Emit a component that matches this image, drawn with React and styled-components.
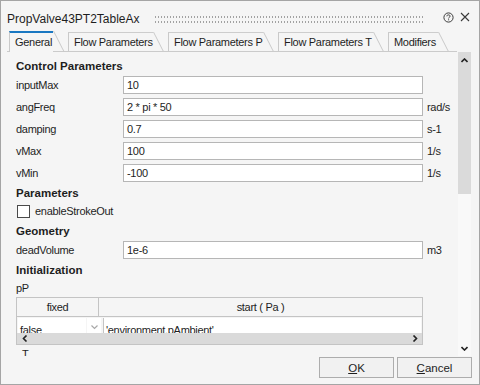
import React from 'react';
import styled, { createGlobalStyle } from 'styled-components';

const GlobalStyle = createGlobalStyle`
  html, body { margin: 0; padding: 0; background: #f5f5f5; }
  body { font-family: "Liberation Sans", Arial, sans-serif; }
`;

const tabs = [
  { label: 'General', w: 44, active: true },
  { label: 'Flow Parameters', w: 85 },
  { label: 'Flow Parameters P', w: 95 },
  { label: 'Flow Parameters T', w: 95 },
  { label: 'Modifiers', w: 50 },
];

const fields = [
  { name: 'inputMax', value: '10', unit: '' },
  { name: 'angFreq', value: '2 * pi * 50', unit: 'rad/s' },
  { name: 'damping', value: '0.7', unit: 's-1' },
  { name: 'vMax', value: '100', unit: '1/s' },
  { name: 'vMin', value: '-100', unit: '1/s' },
];

const App = () => (
  <>
    <GlobalStyle />
    <Dialog>
      <TitleBar>
        <Title>PropValve43PT2TableAx</Title>
        <Grip />
        <IconButton>
          <svg width="11" height="11" viewBox="0 0 11 11">
            <circle cx="5.5" cy="5.5" r="4.6" fill="none" stroke="#3a3a3a" strokeWidth="1" />
            <path d="M3.9 4.3 C3.9 3.2 4.6 2.9 5.5 2.9 C6.4 2.9 7.1 3.4 7.1 4.2 C7.1 5.2 5.6 5.2 5.6 6.4" fill="none" stroke="#3a3a3a" strokeWidth="1" />
            <rect x="5.1" y="7.3" width="1" height="1" fill="#3a3a3a" />
          </svg>
        </IconButton>
        <IconButton>
          <svg width="10" height="10" viewBox="0 0 10 10">
            <path d="M1 1 L9 9 M9 1 L1 9" stroke="#3a3a3a" strokeWidth="1.1" />
          </svg>
        </IconButton>
      </TitleBar>

      <TabStrip>
        {tabs.map((t) => (
          <Tab key={t.label} $active={t.active} $w={t.w}>
            {t.label}
          </Tab>
        ))}
      </TabStrip>

      <Body>
        <Content>
          <Heading $top={5}>Control Parameters</Heading>
          {fields.map((f, i) => (
            <FieldRow key={f.name} $top={i === 0 ? 1 : 4}>
              <Label>{f.name}</Label>
              <Input>{f.value}</Input>
              <Unit>{f.unit}</Unit>
            </FieldRow>
          ))}
          <Heading $top={2}>Parameters</Heading>
          <CheckRow>
            <Checkbox />
            <Label>enableStrokeOut</Label>
          </CheckRow>
          <Heading $top={2}>Geometry</Heading>
          <FieldRow $top={1}>
            <Label>deadVolume</Label>
            <Input>1e-6</Input>
            <Unit>m3</Unit>
          </FieldRow>
          <Heading $top={2}>Initialization</Heading>
          <TextLine>pP</TextLine>
          <Table>
            <HeaderRow>
              <HeaderCell $w={82}>fixed</HeaderCell>
              <HeaderCell>start ( Pa )</HeaderCell>
            </HeaderRow>
            <DataRow>
              <ValueCell $w={66}>false</ValueCell>
              <DropCell>
                <svg width="7" height="5" viewBox="0 0 7 5">
                  <path d="M0.5 0.5 L3.5 3.5 L6.5 0.5" fill="none" stroke="#a8a8a8" strokeWidth="1.2" />
                </svg>
              </DropCell>
              <ValueCell $grow>'environment.pAmbient'</ValueCell>
            </DataRow>
            <HScroll>
              <svg width="6" height="7" viewBox="0 0 6 7">
                <path d="M4.5 0.5 L1.5 3.5 L4.5 6.5" fill="none" stroke="#222" strokeWidth="1.6" />
              </svg>
              <svg width="6" height="7" viewBox="0 0 6 7">
                <path d="M1.5 0.5 L4.5 3.5 L1.5 6.5" fill="none" stroke="#222" strokeWidth="1.6" />
              </svg>
            </HScroll>
          </Table>
          <TextLine $indent={6}>T</TextLine>
        </Content>
        <VScroll>
          <Thumb>
            <svg width="7" height="5" viewBox="0 0 7 5">
              <path d="M0.5 4 L3.5 1 L6.5 4" fill="none" stroke="#222" strokeWidth="1.6" />
            </svg>
          </Thumb>
          <svg width="7" height="5" viewBox="0 0 7 5">
            <path d="M0.5 1 L3.5 4 L6.5 1" fill="none" stroke="#222" strokeWidth="1.6" />
          </svg>
        </VScroll>
      </Body>

      <Footer>
        <Button><u>O</u>K</Button>
        <Button><u>C</u>ancel</Button>
      </Footer>
    </Dialog>
  </>
);

const Dialog = styled.div`
  width: 480px;
  height: 385px;
  box-sizing: border-box;
  border: 1px solid #a5a5a5;
  background: #f5f5f5;
  display: flex;
  flex-direction: column;
  color: #1e1e1e;
  font-size: 11px;
  letter-spacing: -0.3px;
  overflow: hidden;
`;

const TitleBar = styled.div`
  height: 30px;
  flex-shrink: 0;
  box-sizing: border-box;
  padding: 6px 9px 0 6px;
  display: flex;
  align-items: center;
`;

const Title = styled.span`
  font-size: 12px;
  letter-spacing: 0;
  color: #1e1e1e;
`;

// two rows of 2px dots, 3px apart
const Grip = styled.div`
  flex: 1;
  align-self: flex-start;
  height: 7px;
  margin: 9px 12px 0 15px;
  background-image: conic-gradient(at 1px 2px, transparent 75%, #a2a2a2 0);
  background-size: 3px 5px;
`;

const IconButton = styled.div`
  display: flex;
  margin: 0 0 4px 6px;
`;

const TabStrip = styled.div`
  height: 20px;
  flex-shrink: 0;
  margin: 0 22px 0 6px;
  padding-left: 2px;
  border-bottom: 1px solid #cbcbcb;
  display: flex;
  align-items: flex-end;
`;

const Tab = styled.div`
  position: relative;
  box-sizing: border-box;
  width: ${(p) => p.$w}px;
  height: ${(p) => (p.$active ? 21 : 19)}px;
  margin-right: 15px;
  margin-bottom: ${(p) => (p.$active ? -1 : 0)}px;
  padding-left: 5px;
  border-left: 1px solid #c9c9c9;
  border-top: ${(p) => (p.$active ? '2px solid #1a78c2' : '1px solid #cdcdcd')};
  background: #f5f5f5;
  display: flex;
  align-items: center;
  padding-bottom: ${(p) => (p.$active ? 2 : 0)}px;
  white-space: nowrap;
  font-size: 11px;

  &::after {
    content: '';
    position: absolute;
    top: ${(p) => (p.$active ? -2 : -1)}px;
    left: 100%;
    height: ${(p) => (p.$active ? 21 : 19)}px;
    border-left: 1px solid #c9c9c9;
    transform: skewX(27deg);
    transform-origin: top left;
  }
`;

const Body = styled.div`
  height: 304px;
  flex-shrink: 0;
  display: flex;
`;

const Content = styled.div`
  flex: 1;
  overflow: hidden;
  padding-left: 15px;
`;

const Heading = styled.div`
  height: 18px;
  line-height: 18px;
  margin-top: ${(p) => p.$top}px;
  font-weight: bold;
  font-size: 11.5px;
  letter-spacing: 0;
  color: #1e1e1e;
`;

const TextLine = styled.div`
  height: 18px;
  line-height: 18px;
  padding-left: ${(p) => p.$indent || 0}px;
`;

const FieldRow = styled.div`
  display: grid;
  grid-template-columns: 107px 300px auto;
  align-items: center;
  height: 18px;
  margin-top: ${(p) => p.$top}px;
`;

const Label = styled.span`
  color: #1e1e1e;
`;

const Input = styled.div`
  box-sizing: border-box;
  height: 18px;
  border: 1px solid #b6b6b6;
  background: #fff;
  padding-left: 3px;
  line-height: 16px;
  white-space: nowrap;
`;

const Unit = styled.span`
  padding-left: 4px;
`;

const CheckRow = styled.div`
  height: 18px;
  display: flex;
  align-items: center;
  gap: 5px;
  padding-left: 1px;
`;

const Checkbox = styled.div`
  width: 11px;
  height: 11px;
  border: 1px solid #4a4a4a;
  background: #fff;
`;

const Table = styled.div`
  width: 407px;
  box-sizing: border-box;
  border: 1px solid #c4c4c4;
  height: 48px;
  display: flex;
  flex-direction: column;
  overflow: hidden;
`;

const HeaderRow = styled.div`
  display: flex;
  flex-shrink: 0;
  height: 18px;
  border-bottom: 1px solid #c4c4c4;
  background: #f5f5f5;
`;

const HeaderCell = styled.div`
  width: ${(p) => (p.$w ? `${p.$w}px` : 'auto')};
  flex: ${(p) => (p.$w ? 'none' : 1)};
  box-sizing: border-box;
  border-right: ${(p) => (p.$w ? '1px solid #c4c4c4' : 'none')};
  text-align: center;
  line-height: 18px;
`;

const DataRow = styled.div`
  display: flex;
  flex-shrink: 0;
  height: 16px;
  overflow: hidden;
  gap: 1px;
  padding: 1px 1px 0 1px;
  box-sizing: border-box;
`;

const ValueCell = styled.div`
  width: ${(p) => (p.$w ? `${p.$w}px` : 'auto')};
  flex: ${(p) => (p.$grow ? 1 : 'none')};
  background: #fff;
  padding: 1px 0 0 2px;
  line-height: 22px;
  white-space: nowrap;
  ${(p) => p.$grow && 'border-left: 1px solid #c4c4c4; margin-left: 1px;'}
`;

const DropCell = styled.div`
  width: 14px;
  background: #fff;
  display: flex;
  justify-content: center;
  padding-top: 7px;
  box-sizing: border-box;
`;

const HScroll = styled.div`
  height: 11px;
  flex-shrink: 0;
  background: #dadada;
  display: flex;
  align-items: center;
  justify-content: space-between;
  padding: 0 4px 0 5px;
`;

const VScroll = styled.div`
  width: 13px;
  margin-right: 8px;
  background: #f9f9f9;
  display: flex;
  flex-direction: column;
  align-items: center;
  justify-content: space-between;
  padding-bottom: 5px;
`;

const Thumb = styled.div`
  width: 13px;
  height: 142px;
  background: #dadada;
  display: flex;
  justify-content: center;
  padding-top: 6px;
  box-sizing: border-box;
`;

const Footer = styled.div`
  flex: 1;
  display: flex;
  justify-content: flex-end;
  align-items: flex-start;
  gap: 3px;
  padding: 1px 7px 0 0;
`;

const Button = styled.button`
  width: 75px;
  height: 21px;
  box-sizing: border-box;
  border: 1px solid #adadad;
  background: #f1f1f1;
  font-family: "Liberation Sans", Arial, sans-serif;
  font-size: 11.5px;
  color: #1e1e1e;
  padding: 0;
  u { text-decoration-thickness: 1px; text-underline-offset: 1px; }
`;

export default App;
